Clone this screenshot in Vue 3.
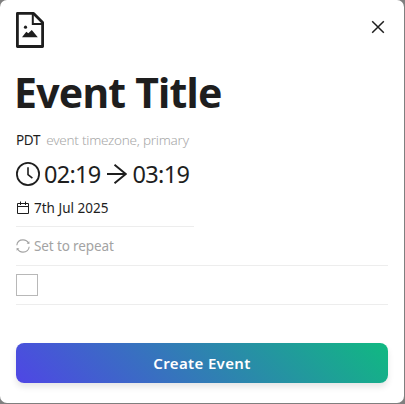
<script setup>
import { ref } from 'vue'

const title = ref('Event Title')
const timezone = ref('PDT')
const start = ref('02:19')
const end = ref('03:19')
const date = ref('7th Jul 2025')
const checked = ref(false)
</script>

<template>
  <div class="backdrop">
    <div class="modal">
      <header class="modal__header">
        <svg class="file-icon" width="30" height="38" viewBox="0 0 30 38">
          <path d="M2.4 2.4H18.6L27.6 11.5V35.5H2.4Z" fill="none" stroke="#1e1e1e" stroke-width="2.8" stroke-linejoin="round" />
          <path d="M17.8 2V12.9H28" fill="none" stroke="#1e1e1e" stroke-width="2" />
          <circle cx="10.5" cy="16.2" r="1.6" fill="#1e1e1e" />
          <path d="M7 26.2L11.3 20.8L13.3 22.3L16.8 18.9L22.8 26.2Z" fill="#1e1e1e" />
        </svg>
        <button type="button" class="close" aria-label="Close">
          <svg width="14" height="14" viewBox="0 0 14 14">
            <path d="M1.2 1.2L12.8 12.8M12.8 1.2L1.2 12.8" stroke="#1e1e1e" stroke-width="1.5" />
          </svg>
        </button>
      </header>

      <h1 class="title">{{ title }}</h1>

      <div class="timezone">
        <span class="timezone__name">{{ timezone }}</span>
        <span class="timezone__hint">event timezone, primary</span>
      </div>

      <div class="time">
        <svg width="24" height="24" viewBox="0 0 24 24" fill="none" stroke="#1e1e1e">
          <circle cx="12" cy="12" r="11.1" stroke-width="1.8" />
          <path d="M12 5.3V12.7L16.4 16.2" stroke-width="1.6" />
        </svg>
        <span class="time__value">{{ start }}</span>
        <svg class="time__arrow" width="20" height="20" viewBox="0 0 20 20" fill="none" stroke="#1e1e1e" stroke-width="1.9">
          <path d="M0 10H19M7.5 0.7L18.8 10L7.5 19.3" />
        </svg>
        <span class="time__value">{{ end }}</span>
      </div>

      <div class="date">
        <svg width="14" height="14" viewBox="0 0 14 14" fill="none" stroke="#1e1e1e">
          <path d="M1.5 2.5H12.5V12.5H1.5ZM1 5.5H13M4.5 0.5V4M9.5 0.5V4" />
        </svg>
        <span>{{ date }}</span>
      </div>

      <div class="repeat">
        <svg width="14" height="14" viewBox="0 0 14 14" fill="none" stroke="#a3a3a3" stroke-width="1.1">
          <path d="M0.8 6.2C1.2 3 3.8 0.9 7 0.9C9.6 0.9 11.6 2.2 12.6 4.2M13.2 7.8C12.8 11 10.2 13.1 7 13.1C4.4 13.1 2.4 11.8 1.4 9.8" />
          <path d="M13.4 2.2V5L10.6 4.4ZM0.6 11.8V9L3.4 9.6Z" fill="#a3a3a3" stroke="none" />
        </svg>
        <span class="repeat__label">Set to repeat</span>
      </div>

      <div class="option">
        <button type="button" class="checkbox" role="checkbox" :aria-checked="checked" @click="checked = !checked"></button>
      </div>

      <button type="button" class="submit">Create Event</button>
    </div>
  </div>
</template>

<style>
body {
  margin: 0;
}
</style>

<style scoped>
.backdrop {
  box-sizing: border-box;
  height: 404px;
  padding: 0 1px 1px 0;
  background: #7f7f7f;
}
.modal {
  box-sizing: border-box;
  display: flex;
  flex-direction: column;
  height: 403px;
  padding: 11px 16px 20px;
  border-radius: 7px;
  background: #fff;
  color: #1e1e1e;
  font-family: 'Noto Sans', 'Open Sans', sans-serif;
  font-size: 13.5px;
}
.modal__header {
  display: flex;
  justify-content: space-between;
  height: 54px;
}
.file-icon {
  margin-left: -1px;
}
.close {
  width: 14px;
  height: 14px;
  margin: 9px 3px 0 0;
  padding: 0;
  border: 0;
  background: none;
  cursor: pointer;
}
.close svg {
  display: block;
}
.title {
  height: 56px;
  margin: 0 0 0 -2px;
  font-size: 41px;
  font-weight: 700;
  line-height: 55px;
  letter-spacing: -0.8px;
  white-space: nowrap;
}
.timezone {
  display: flex;
  gap: 6px;
  height: 38px;
  line-height: 38px;
}
.timezone__name {
  letter-spacing: -0.3px;
}
.timezone__hint {
  color: #a8a8a8;
  font-weight: 300;
  letter-spacing: -0.24px;
}
.time {
  display: flex;
  align-items: center;
  height: 30px;
}
.time__value {
  margin-left: 4px;
  font-size: 23.5px;
  line-height: 30px;
  letter-spacing: -0.7px;
}
.time__arrow {
  margin: 0 2px 0 6px;
}
.date {
  display: flex;
  align-items: center;
  gap: 4px;
  width: 178px;
  height: 37px;
  border-bottom: 1px solid #ededed;
}
.repeat {
  display: flex;
  align-items: center;
  gap: 4px;
  height: 38px;
  border-bottom: 1px solid #ededed;
  color: #a3a3a3;
}
.repeat__label {
  letter-spacing: -0.12px;
}
.option {
  display: flex;
  align-items: center;
  height: 38px;
  margin-bottom: 38px;
  border-bottom: 1px solid #ededed;
}
.checkbox {
  width: 22px;
  height: 22px;
  padding: 0;
  border: 1px solid #b8b8b8;
  background: #fff;
}
.submit {
  flex: none;
  height: 40px;
  padding: 0;
  border: 0;
  border-radius: 8px;
  background: linear-gradient(45deg, #4f46e5, #10b981);
  box-shadow: 0 4px 6px rgba(0, 0, 0, 0.1);
  color: #fff;
  font-family: inherit;
  font-size: 15px;
  font-weight: 600;
  letter-spacing: 0.35px;
  cursor: pointer;
}
</style>
